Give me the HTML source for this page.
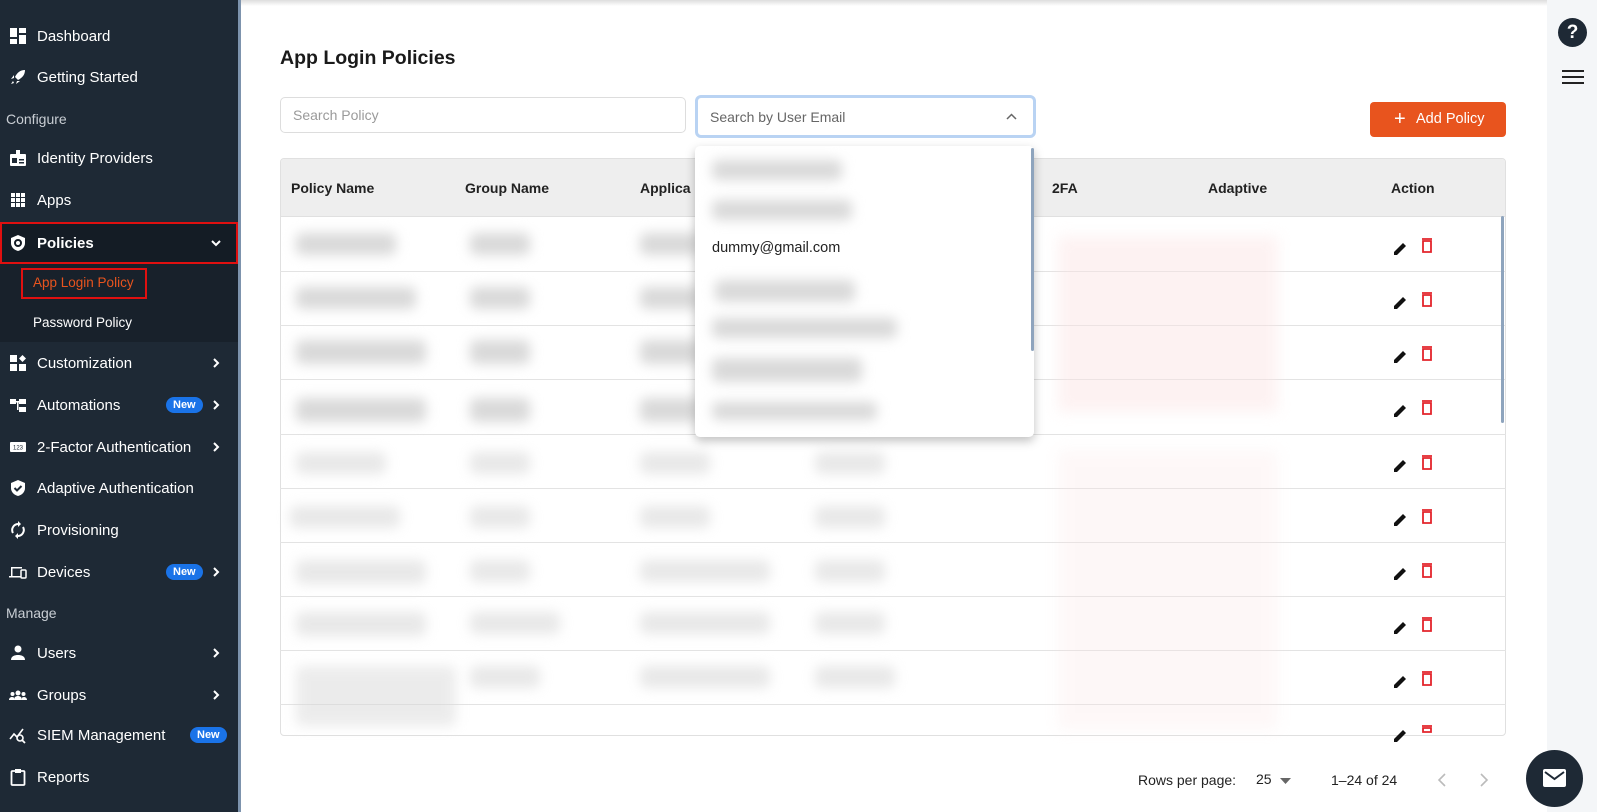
<!DOCTYPE html>
<html><head><meta charset="utf-8"><style>
*{box-sizing:border-box;margin:0;padding:0}
body{width:1597px;height:812px;overflow:hidden;background:#fff;font-family:"Liberation Sans",sans-serif;position:relative;color:#222}
.sb{position:absolute;left:0;top:0;width:238px;height:812px;background:#1e2935}
.sbline{position:absolute;left:238px;top:0;width:3px;height:812px;background:#7d93ad}
.it{position:absolute;left:0;width:238px;height:30px;display:flex;align-items:center;color:#fff;font-size:15px}
.it svg{position:absolute;left:9px;width:18px;height:18px}
.it span.t{position:absolute;left:37px}
.it svg.chev{position:absolute;left:211px;width:10px;height:10px}
.sec{position:absolute;left:6px;color:#c9ced4;font-size:14px}
.new{position:absolute;background:#1a73e8;color:#fff;font-size:11px;font-weight:bold;border-radius:8px;padding:2px 7px}
.blur{position:absolute;background:#d9d9d9;filter:blur(6px);border-radius:6px}
.pink{position:absolute;background:#fbe3e3;filter:blur(7px)}
.hd{position:absolute;top:180px;font-size:14px;font-weight:bold;color:#222}
.rl{position:absolute;left:280px;width:1226px;height:1px;background:#e3e3e3}
</style></head><body>
<div class="sb"></div><div class="sbline"></div>
<div style="position:absolute;left:241px;top:0;width:1306px;height:6px;background:linear-gradient(#ddd,#fff)"></div>

<div class="it" style="top:21px"><svg viewBox="0 0 18 18"><rect x="1" y="1" width="7" height="9" fill="#fff"/><rect x="10" y="1" width="7" height="5" fill="#fff"/><rect x="1" y="12" width="7" height="5" fill="#fff"/><rect x="10" y="8" width="7" height="9" fill="#fff"/></svg><span class="t">Dashboard</span></div>
<div class="it" style="top:62px"><svg viewBox="0 0 18 18"><path d="M16 2C11 2 8 5 6 9l3 3c4-2 7-5 7-10zM5 10l-3 1 3-4zM8 13l-1 3 4-3zM4 13l-2 3 3-1z" fill="#fff"/></svg><span class="t">Getting Started</span></div>
<div class="sec" style="top:111px">Configure</div>
<div class="it" style="top:143px"><svg viewBox="0 0 18 18"><rect x="1" y="5" width="16" height="12" rx="1" fill="#fff"/><rect x="7" y="1" width="4" height="5" fill="#fff"/><rect x="3" y="9" width="5" height="5" fill="#1e2935"/><rect x="10" y="10" width="5" height="1.5" fill="#1e2935"/><rect x="10" y="13" width="5" height="1.5" fill="#1e2935"/></svg><span class="t">Identity Providers</span></div>
<div class="it" style="top:185px"><svg viewBox="0 0 18 18" fill="#fff"><rect x="2" y="2" width="4" height="4"/><rect x="7" y="2" width="4" height="4"/><rect x="12" y="2" width="4" height="4"/><rect x="2" y="7" width="4" height="4"/><rect x="7" y="7" width="4" height="4"/><rect x="12" y="7" width="4" height="4"/><rect x="2" y="12" width="4" height="4"/><rect x="7" y="12" width="4" height="4"/><rect x="12" y="12" width="4" height="4"/></svg><span class="t">Apps</span></div>
<div style="position:absolute;left:0;top:222px;width:238px;height:42px;background:#141c25;border:2px solid #e01010"></div>
<div class="it" style="top:228px;font-weight:bold"><svg viewBox="0 0 18 18"><path d="M9 1l7 3v5c0 4-3 7-7 8-4-1-7-4-7-8V4z" fill="#fff"/><circle cx="9" cy="9" r="3" fill="none" stroke="#141c25" stroke-width="2"/></svg><span class="t">Policies</span><svg class="chev" viewBox="0 0 10 10"><path d="M1 3l4 4 4-4" stroke="#fff" stroke-width="2" fill="none"/></svg></div>
<div style="position:absolute;left:0;top:264px;width:238px;height:78px;background:#18212b"></div>
<div style="position:absolute;left:21px;top:268px;width:126px;height:31px;border:2px solid #e01010"></div>
<div style="position:absolute;left:33px;top:275px;color:#e8541e;font-size:13.5px">App Login Policy</div>
<div style="position:absolute;left:33px;top:315px;color:#fff;font-size:13.5px">Password Policy</div>
<div class="it" style="top:348px"><svg viewBox="0 0 18 18" fill="#fff"><rect x="1" y="1" width="7" height="7"/><rect x="1" y="10" width="7" height="7"/><rect x="10" y="10" width="7" height="7"/><path d="M13.5 1l3.5 3.5-3.5 3.5-3.5-3.5z"/></svg><span class="t">Customization</span><svg class="chev" viewBox="0 0 10 10"><path d="M3 1l4 4-4 4" stroke="#fff" stroke-width="2" fill="none"/></svg></div>
<div class="it" style="top:390px"><svg viewBox="0 0 18 18" fill="#fff"><rect x="1" y="3" width="6" height="5"/><rect x="10" y="3" width="7" height="5"/><rect x="10" y="11" width="7" height="5"/><rect x="7" y="5" width="3" height="1.5"/><rect x="8" y="5" width="1.5" height="9"/></svg><span class="t">Automations</span><span class="new" style="left:166px;top:7px">New</span><svg class="chev" viewBox="0 0 10 10"><path d="M3 1l4 4-4 4" stroke="#fff" stroke-width="2" fill="none"/></svg></div>
<div class="it" style="top:432px"><svg viewBox="0 0 18 18"><rect x="1" y="4" width="16" height="10" rx="1" fill="#fff"/><text x="9" y="11.5" font-size="6" text-anchor="middle" fill="#1e2935" font-family="Liberation Sans">123</text></svg><span class="t">2-Factor Authentication</span><svg class="chev" viewBox="0 0 10 10"><path d="M3 1l4 4-4 4" stroke="#fff" stroke-width="2" fill="none"/></svg></div>
<div class="it" style="top:473px"><svg viewBox="0 0 18 18"><path d="M9 1l7 3v5c0 4-3 7-7 8-4-1-7-4-7-8V4z" fill="#fff"/><path d="M5.5 9l2.5 2.5 4.5-4.5" stroke="#1e2935" stroke-width="2" fill="none"/></svg><span class="t">Adaptive Authentication</span></div>
<div class="it" style="top:515px"><svg viewBox="0 0 18 18"><path d="M9 3a6 6 0 0 0-5 9M9 15a6 6 0 0 0 5-9" stroke="#fff" stroke-width="2" fill="none"/><path d="M9 0v6l3-3zM9 18v-6l-3 3z" fill="#fff"/></svg><span class="t">Provisioning</span></div>
<div class="it" style="top:557px"><svg viewBox="0 0 18 18"><path d="M2 4h11v1.5H3.5V13H2z" fill="#fff"/><rect x="0" y="13" width="12" height="1.5" fill="#fff"/><rect x="12" y="7" width="5" height="8" rx="1" fill="none" stroke="#fff" stroke-width="1.5"/></svg><span class="t">Devices</span><span class="new" style="left:166px;top:7px">New</span><svg class="chev" viewBox="0 0 10 10"><path d="M3 1l4 4-4 4" stroke="#fff" stroke-width="2" fill="none"/></svg></div>
<div class="sec" style="top:605px">Manage</div>
<div class="it" style="top:638px"><svg viewBox="0 0 18 18" fill="#fff"><circle cx="9" cy="5" r="3.5"/><path d="M2 16c0-4 4-5 7-5s7 1 7 5z"/></svg><span class="t">Users</span><svg class="chev" viewBox="0 0 10 10"><path d="M3 1l4 4-4 4" stroke="#fff" stroke-width="2" fill="none"/></svg></div>
<div class="it" style="top:680px"><svg viewBox="0 0 18 18" fill="#fff"><circle cx="9" cy="7" r="2.5"/><circle cx="3.5" cy="8" r="2"/><circle cx="14.5" cy="8" r="2"/><path d="M5 14c0-3 2-4 4-4s4 1 4 4zM0 14c0-2 1.5-3 3-3s2 .5 2 1v2zM18 14c0-2-1.5-3-3-3s-2 .5-2 1v2z"/></svg><span class="t">Groups</span><svg class="chev" viewBox="0 0 10 10"><path d="M3 1l4 4-4 4" stroke="#fff" stroke-width="2" fill="none"/></svg></div>
<div class="it" style="top:720px"><svg viewBox="0 0 18 18"><path d="M1 13l4-5 3 3 6-8" stroke="#fff" stroke-width="1.6" fill="none"/><circle cx="11" cy="12" r="3" stroke="#fff" stroke-width="1.6" fill="none"/><path d="M13 14l3 3" stroke="#fff" stroke-width="1.8"/></svg><span class="t">SIEM Management</span><span class="new" style="left:190px;top:7px">New</span></div>
<div class="it" style="top:762px"><svg viewBox="0 0 18 18"><rect x="2.5" y="3" width="13" height="14" rx="1" fill="none" stroke="#fff" stroke-width="1.8"/><rect x="6" y="1" width="6" height="4" fill="#fff"/></svg><span class="t">Reports</span></div>

<div style="position:absolute;left:1547px;top:0;width:50px;height:812px;background:#f4f6f8"></div>
<div style="position:absolute;left:1558px;top:18px;width:29px;height:29px;border-radius:50%;background:#1e2935;color:#fff;font-weight:bold;font-size:19px;text-align:center;line-height:29px">?</div>
<div style="position:absolute;left:1562px;top:70px;width:22px;height:2px;background:#222;box-shadow:0 6px 0 #222,0 12px 0 #222"></div>
<div style="position:absolute;left:1526px;top:750px;width:57px;height:57px;border-radius:50%;background:#1e2935"></div>
<svg style="position:absolute;left:1543px;top:769px" width="23" height="18" viewBox="0 0 23 18"><rect x="0" y="0" width="23" height="18" rx="2" fill="#fff"/><path d="M2 3l9.5 7L21 3" stroke="#1e2935" stroke-width="2" fill="none"/></svg>

<div style="position:absolute;left:280px;top:47px;font-size:19.5px;font-weight:bold;color:#1a1a1a">App Login Policies</div>
<div style="position:absolute;left:280px;top:97px;width:406px;height:36px;border:1px solid #ddd;border-radius:5px;color:#9a9a9a;font-size:14px;padding:9px 12px">Search Policy</div>
<div style="position:absolute;left:695px;top:95px;width:341px;height:43px;border:3px solid #b9d3f3;border-radius:6px;color:#666;font-size:14px;padding:11px 12px">Search by User Email<svg style="position:absolute;right:16px;top:15px" width="11" height="7" viewBox="0 0 11 7"><path d="M1 6l4.5-4.5L10 6" stroke="#666" stroke-width="1.5" fill="none"/></svg></div>
<div style="position:absolute;left:1370px;top:102px;width:136px;height:35px;background:#e8541e;border-radius:4px;color:#fff;font-size:14.5px;padding:9px 0 0 46px">Add Policy</div>
<div style="position:absolute;left:1394px;top:111px;color:#fff;font-size:20px;line-height:16px">+</div>

<div style="position:absolute;left:280px;top:158px;width:1226px;height:578px;border:1px solid #e0e0e0;border-radius:4px;overflow:hidden">
<div style="height:58px;background:#eeeeee;border-bottom:1px solid #e0e0e0"></div></div>
<div class="hd" style="left:291px">Policy Name</div>
<div class="hd" style="left:465px">Group Name</div>
<div class="hd" style="left:640px">Applica</div>
<div class="hd" style="left:1052px">2FA</div>
<div class="hd" style="left:1208px">Adaptive</div>
<div class="hd" style="left:1391px">Action</div>
<div class="rl" style="top:271px"></div><div class="rl" style="top:325px"></div><div class="rl" style="top:379px"></div><div class="rl" style="top:434px"></div><div class="rl" style="top:488px"></div><div class="rl" style="top:542px"></div><div class="rl" style="top:596px"></div><div class="rl" style="top:650px"></div><div class="rl" style="top:704px"></div>
<div style="position:absolute;left:1501px;top:216px;width:3px;height:207px;background:#8ea4bd;border-radius:2px"></div>
<div class="blur" style="left:296px;top:233px;width:100px;height:22px"></div><div class="blur" style="left:470px;top:233px;width:60px;height:22px"></div><div class="blur" style="left:640px;top:233px;width:60px;height:22px"></div>
<div class="blur" style="left:296px;top:287px;width:120px;height:22px"></div><div class="blur" style="left:470px;top:287px;width:60px;height:22px"></div><div class="blur" style="left:640px;top:287px;width:60px;height:22px"></div>
<div class="blur" style="left:296px;top:340px;width:130px;height:24px"></div><div class="blur" style="left:470px;top:340px;width:60px;height:24px"></div><div class="blur" style="left:640px;top:340px;width:60px;height:24px"></div>
<div class="blur" style="left:296px;top:398px;width:130px;height:24px"></div><div class="blur" style="left:470px;top:398px;width:60px;height:24px"></div><div class="blur" style="left:640px;top:398px;width:60px;height:24px"></div>
<div class="blur" style="left:296px;top:452px;width:90px;height:22px;opacity:.6"></div><div class="blur" style="left:470px;top:452px;width:60px;height:22px;opacity:.6"></div><div class="blur" style="left:640px;top:452px;width:70px;height:22px;opacity:.6"></div><div class="blur" style="left:815px;top:452px;width:70px;height:22px;opacity:.6"></div>
<div class="blur" style="left:290px;top:506px;width:110px;height:22px;opacity:.6"></div><div class="blur" style="left:470px;top:506px;width:60px;height:22px;opacity:.6"></div><div class="blur" style="left:640px;top:506px;width:70px;height:22px;opacity:.6"></div><div class="blur" style="left:815px;top:506px;width:70px;height:22px;opacity:.6"></div>
<div class="blur" style="left:296px;top:560px;width:130px;height:24px;opacity:.6"></div><div class="blur" style="left:470px;top:560px;width:60px;height:22px;opacity:.6"></div><div class="blur" style="left:640px;top:560px;width:130px;height:22px;opacity:.6"></div><div class="blur" style="left:815px;top:560px;width:70px;height:22px;opacity:.6"></div>
<div class="blur" style="left:296px;top:612px;width:130px;height:24px;opacity:.6"></div><div class="blur" style="left:470px;top:612px;width:90px;height:22px;opacity:.6"></div><div class="blur" style="left:640px;top:612px;width:130px;height:22px;opacity:.6"></div><div class="blur" style="left:815px;top:612px;width:70px;height:22px;opacity:.6"></div>
<div class="blur" style="left:296px;top:666px;width:160px;height:60px;opacity:.5"></div><div class="blur" style="left:470px;top:666px;width:70px;height:22px;opacity:.6"></div><div class="blur" style="left:640px;top:666px;width:130px;height:22px;opacity:.6"></div><div class="blur" style="left:815px;top:666px;width:80px;height:22px;opacity:.6"></div>
<div class="pink" style="left:1058px;top:236px;width:220px;height:176px;opacity:.45"></div>
<div class="pink" style="left:1058px;top:450px;width:220px;height:280px;opacity:.25"></div>

<div style="position:absolute;left:695px;top:146px;width:339px;height:291px;background:#fff;border-radius:5px;box-shadow:0 4px 10px rgba(0,0,0,.25)"></div>
<div style="position:absolute;left:1031px;top:148px;width:3px;height:203px;background:#8ea4bd;border-radius:2px"></div>
<div class="blur" style="left:712px;top:160px;width:130px;height:20px"></div>
<div class="blur" style="left:712px;top:200px;width:140px;height:20px"></div>
<div style="position:absolute;left:712px;top:240px;font-size:14.5px;color:#222">dummy@gmail.com</div>
<div class="blur" style="left:715px;top:280px;width:140px;height:22px"></div>
<div class="blur" style="left:712px;top:318px;width:185px;height:20px"></div>
<div class="blur" style="left:712px;top:358px;width:150px;height:24px"></div>
<div class="blur" style="left:712px;top:402px;width:165px;height:18px"></div>

<div style="position:absolute;left:1138px;top:772px;font-size:14px;color:#222">Rows per page:</div>
<div style="position:absolute;left:1256px;top:771px;font-size:14px;color:#222">25</div>
<svg style="position:absolute;left:1280px;top:778px" width="11" height="6"><path d="M0 0h11L5.5 6z" fill="#666"/></svg>
<div style="position:absolute;left:1331px;top:772px;font-size:14px;color:#222">1–24 of 24</div>
<svg style="position:absolute;left:1437px;top:773px" width="10" height="14"><path d="M8 1L2 7l6 6" stroke="#bbb" stroke-width="1.6" fill="none"/></svg>
<svg style="position:absolute;left:1479px;top:773px" width="10" height="14"><path d="M2 1l6 6-6 6" stroke="#bbb" stroke-width="1.6" fill="none"/></svg>

<svg style="position:absolute;left:0;top:0;pointer-events:none" width="1597" height="812">
<g transform="translate(0,244)"><path d="M1394 8l9-9 3 3-9 9h-3z" fill="#111"/><path d="M1422-5h10M1423-3h8v11h-8z" stroke="#e3242b" stroke-width="1.8" fill="none"/></g>
<g transform="translate(0,298)"><path d="M1394 8l9-9 3 3-9 9h-3z" fill="#111"/><path d="M1422-5h10M1423-3h8v11h-8z" stroke="#e3242b" stroke-width="1.8" fill="none"/></g>
<g transform="translate(0,352)"><path d="M1394 8l9-9 3 3-9 9h-3z" fill="#111"/><path d="M1422-5h10M1423-3h8v11h-8z" stroke="#e3242b" stroke-width="1.8" fill="none"/></g>
<g transform="translate(0,406)"><path d="M1394 8l9-9 3 3-9 9h-3z" fill="#111"/><path d="M1422-5h10M1423-3h8v11h-8z" stroke="#e3242b" stroke-width="1.8" fill="none"/></g>
<g transform="translate(0,461)"><path d="M1394 8l9-9 3 3-9 9h-3z" fill="#111"/><path d="M1422-5h10M1423-3h8v11h-8z" stroke="#e3242b" stroke-width="1.8" fill="none"/></g>
<g transform="translate(0,515)"><path d="M1394 8l9-9 3 3-9 9h-3z" fill="#111"/><path d="M1422-5h10M1423-3h8v11h-8z" stroke="#e3242b" stroke-width="1.8" fill="none"/></g>
<g transform="translate(0,569)"><path d="M1394 8l9-9 3 3-9 9h-3z" fill="#111"/><path d="M1422-5h10M1423-3h8v11h-8z" stroke="#e3242b" stroke-width="1.8" fill="none"/></g>
<g transform="translate(0,623)"><path d="M1394 8l9-9 3 3-9 9h-3z" fill="#111"/><path d="M1422-5h10M1423-3h8v11h-8z" stroke="#e3242b" stroke-width="1.8" fill="none"/></g>
<g transform="translate(0,677)"><path d="M1394 8l9-9 3 3-9 9h-3z" fill="#111"/><path d="M1422-5h10M1423-3h8v11h-8z" stroke="#e3242b" stroke-width="1.8" fill="none"/></g>
<g transform="translate(0,731)"><path d="M1394 8l9-9 3 3-9 9h-3z" fill="#111"/><path d="M1422-5h10M1423-3h8v4h-8z" stroke="#e3242b" stroke-width="1.8" fill="none"/></g>
</svg>
</body></html>
